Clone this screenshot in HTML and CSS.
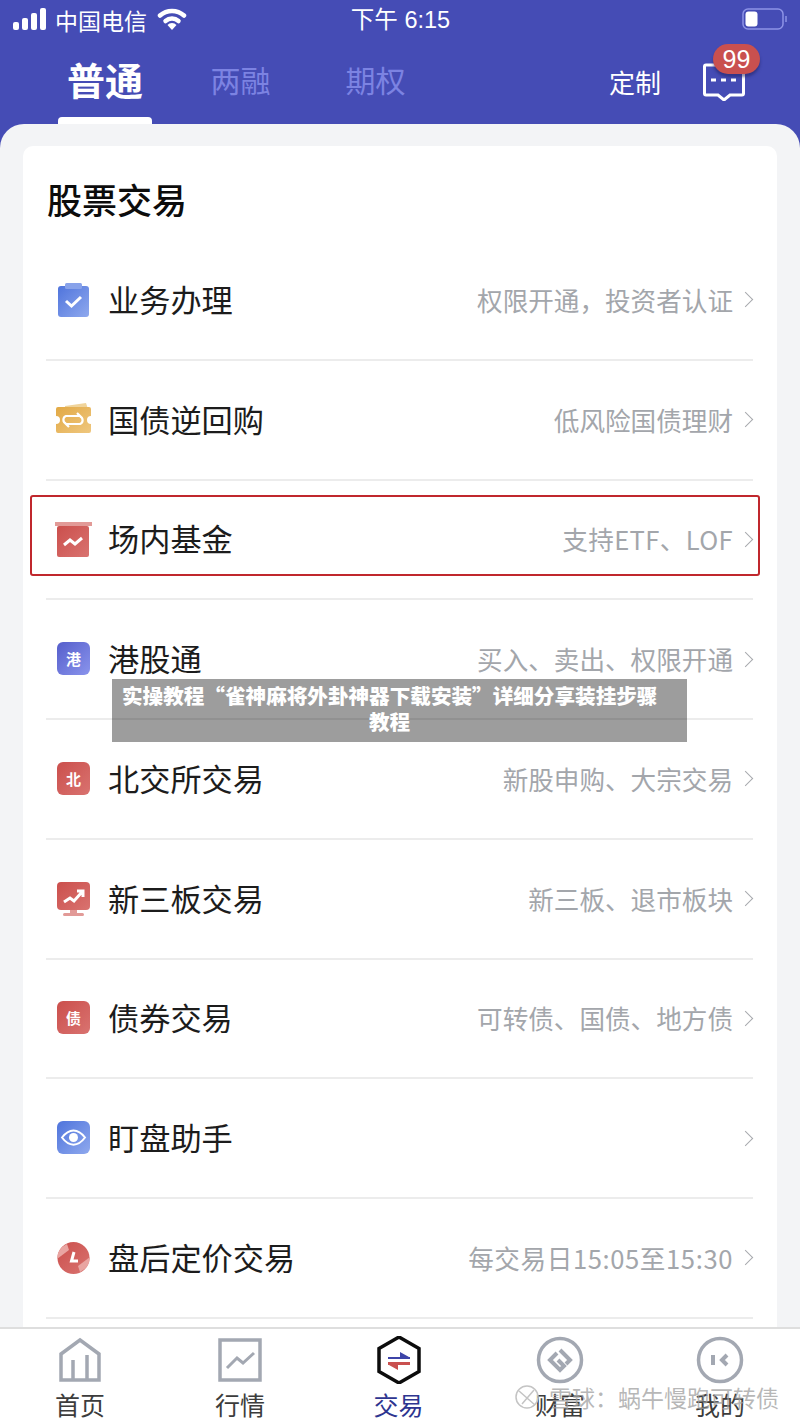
FILE: index.html
```html
<!DOCTYPE html>
<html lang="zh-CN">
<head>
<meta charset="utf-8">
<title>交易</title>
<link rel="stylesheet" href="styles.css">
</head>
<body>
<svg class="defs" aria-hidden="true">
  <defs>
    <linearGradient id="gBlue" x1="0" y1="0" x2="1" y2="1"><stop offset="0" stop-color="#4f74dc"/><stop offset="1" stop-color="#8fa9ee"/></linearGradient>
    <linearGradient id="gIndigo" x1="0" y1="0" x2="1" y2="1"><stop offset="0" stop-color="#555ecb"/><stop offset="1" stop-color="#8a94ec"/></linearGradient>
    <linearGradient id="gRed" x1="0" y1="0" x2="1" y2="1"><stop offset="0" stop-color="#cb4f4c"/><stop offset="1" stop-color="#d97370"/></linearGradient>
    <linearGradient id="gGold" x1="0" y1="0" x2="1" y2="1"><stop offset="0" stop-color="#e2a945"/><stop offset="1" stop-color="#efc77f"/></linearGradient>
  </defs>
</svg>
<div class="phone">
  <header class="top">
    <div class="status">
      <div class="status-left">
        <svg class="signal" viewBox="0 0 33 22"><rect x="0" y="14" width="6" height="8" rx="2"/><rect x="9" y="10" width="6" height="12" rx="2"/><rect x="18" y="5" width="6" height="17" rx="2"/><rect x="27" y="0" width="6" height="22" rx="2"/></svg>
        <span class="carrier">中国电信</span>
        <svg class="wifi" viewBox="0 0 30 22"><path d="M3 7.500a18 18 0 0 1 24 0" fill="none" stroke="#fff" stroke-width="4.500" stroke-linecap="round"/><path d="M8.500 13a10 10 0 0 1 13 0" fill="none" stroke="#fff" stroke-width="4.500" stroke-linecap="round"/><path d="M10.500 17a6 6 0 0 1 9 0L15 22z" fill="#fff"/></svg>
      </div>
      <span class="clock">下午 6:15</span>
      <svg class="battery" viewBox="0 0 46 22"><rect x="1" y="1" width="40" height="20" rx="5" fill="none" stroke="#8d93e6" stroke-width="1.500"/><rect x="3.500" y="3.500" width="12" height="15" rx="3" fill="#fff"/><path d="M44 8v6" stroke="#8d93e6" stroke-width="1.500"/></svg>
    </div>
    <nav class="tabs">
      <a class="tab tab-on">普通</a>
      <a class="tab">两融</a>
      <a class="tab">期权</a>
      <span class="custom">定制</span>
      <div class="msg">
        <svg class="msg-icon" viewBox="0 0 44 38"><path d="M4 2h36a1.500 1.500 0 0 1 1.500 1.500v27a1.500 1.500 0 0 1-1.500 1.500H28l-6 5-6-5H4a1.500 1.500 0 0 1-1.500-1.500v-27A1.500 1.500 0 0 1 4 2z" fill="none" stroke="#fff" stroke-width="3"/><path d="M9 17h5M19 17h5M29 17h5" stroke="#fff" stroke-width="3"/></svg>
        <span class="badge">99</span>
      </div>
    </nav>
  </header>

  <main class="sheet">
    <section class="card">
      <h1 class="title">股票交易</h1>

      <div class="row">
        <svg class="ico" viewBox="0 0 40 40"><rect x="5" y="6" width="31" height="31" rx="3" fill="url(#gBlue)"/><rect x="12" y="3" width="17" height="6" rx="1.500" fill="#88a2ea"/><path d="M13 21l5.500 5L28 17" fill="none" stroke="#fff" stroke-width="3"/></svg>
        <span class="name">业务办理</span><span class="sub">权限开通，投资者认证</span><i class="chev"></i>
      </div>
      <div class="row">
        <svg class="ico" viewBox="0 0 40 40"><path d="M12 6l21-3 2 6H12z" fill="#f0d49b"/><path d="M5 7h31a2 2 0 0 1 2 2v7a4 4 0 0 0 0 8v7a2 2 0 0 1-2 2H5a2 2 0 0 1-2-2v-7a4 4 0 0 0 0-8V9a2 2 0 0 1 2-2z" fill="url(#gGold)"/><path d="M13 23.500a4 4 0 0 1 0-7.500h14l-3-3M27 16.500a4 4 0 0 1 0 7.500H13l3 3" fill="none" stroke="#fff" stroke-width="2.200"/></svg>
        <span class="name">国债逆回购</span><span class="sub">低风险国债理财</span><i class="chev"></i>
      </div>
      <div class="row">
        <svg class="ico" viewBox="0 0 40 40"><rect x="4" y="7" width="32" height="31" rx="2" fill="url(#gRed)"/><rect x="2" y="3" width="37" height="4" fill="#e29a97"/><path d="M11 26l6-5 5 4 7-6" fill="none" stroke="#fff" stroke-width="3"/></svg>
        <span class="name">场内基金</span><span class="sub sub-etf">支持ETF、LOF</span><i class="chev"></i>
      </div>
      <div class="row">
        <svg class="ico" viewBox="0 0 40 40"><rect x="4" y="3" width="33" height="33" rx="6" fill="url(#gIndigo)"/><text class="ico-t" x="20.500" y="25.500">港</text></svg>
        <span class="name">港股通</span><span class="sub">买入、卖出、权限开通</span><i class="chev"></i>
      </div>
      <div class="row">
        <svg class="ico" viewBox="0 0 40 40"><rect x="4" y="3" width="33" height="33" rx="6" fill="url(#gRed)"/><text class="ico-t" x="20.500" y="25.500">北</text></svg>
        <span class="name">北交所交易</span><span class="sub">新股申购、大宗交易</span><i class="chev"></i>
      </div>
      <div class="row">
        <svg class="ico" viewBox="0 0 40 40"><rect x="4" y="3" width="33" height="28" rx="4" fill="url(#gRed)"/><rect x="17" y="31" width="7" height="4" fill="#e29a97"/><rect x="10" y="34" width="21" height="3" rx="1.500" fill="#e29a97"/><path d="M11 23l6-4 4 3 8-9M24 12h6v6" fill="none" stroke="#fff" stroke-width="3"/></svg>
        <span class="name">新三板交易</span><span class="sub">新三板、退市板块</span><i class="chev"></i>
      </div>
      <div class="row">
        <svg class="ico" viewBox="0 0 40 40"><rect x="4" y="3" width="33" height="33" rx="6" fill="url(#gRed)"/><text class="ico-t" x="20.500" y="25.500">债</text></svg>
        <span class="name">债券交易</span><span class="sub">可转债、国债、地方债</span><i class="chev"></i>
      </div>
      <div class="row">
        <svg class="ico" viewBox="0 0 40 40"><rect x="4" y="3" width="33" height="33" rx="6" fill="url(#gBlue)"/><path d="M9 19.500c7-9.500 16-9.500 23 0-7 9.500-16 9.500-23 0z" fill="none" stroke="#fff" stroke-width="2"/><circle cx="20.500" cy="19.500" r="4.500" fill="#fff"/></svg>
        <span class="name">盯盘助手</span><span class="sub"></span><i class="chev"></i>
      </div>
      <div class="row">
        <svg class="ico" viewBox="0 0 40 40"><circle cx="20.500" cy="20" r="16" fill="url(#gRed)"/><path d="M4 21a17 17 0 0 1 10-15l2 6z" fill="#e9a5a2"/><path d="M37 19a17 17 0 0 1-10 15l-2-6z" fill="#e9a5a2"/><path d="M21 14l-2.500 9H25" fill="none" stroke="#fff" stroke-width="3"/></svg>
        <span class="name">盘后定价交易</span><span class="sub sub-time">每交易日15:05至15:30</span><i class="chev"></i>
      </div>
    </section>
  </main>

  <footer class="bar">
    <div class="item">
      <svg class="nav-ico" viewBox="0 0 48 48"><path d="M5 18L24 4l19 14v26H5z" fill="none" stroke="#a3a8b2" stroke-width="3.500"/><path d="M17 44V24M31 44V19" stroke="#a3a8b2" stroke-width="3.500"/></svg>
      <span>首页</span>
    </div>
    <div class="item">
      <svg class="nav-ico" viewBox="0 0 48 48"><rect x="4" y="4" width="40" height="40" fill="none" stroke="#a3a8b2" stroke-width="3.500"/><path d="M11 32l10-10 6 5 11-10" fill="none" stroke="#a3a8b2" stroke-width="3"/></svg>
      <span>行情</span>
    </div>
    <div class="item item-on">
      <svg class="nav-ico" viewBox="0 0 48 48"><path d="M24 1l20 11.500v23L24 47 4 35.500v-23z" fill="none" stroke="#0c0c0c" stroke-width="3.500"/><path d="M13 21h22v2H13zM25 16l9 5H25z" fill="#3d44a8"/><path d="M13 26h22v3H13zM23 29v5l-9-5z" fill="#c9504f"/></svg>
      <span>交易</span>
    </div>
    <div class="item">
      <svg class="nav-ico" viewBox="0 0 48 48"><circle cx="24" cy="24" r="21.500" fill="none" stroke="#a3a8b2" stroke-width="3.500"/><path d="M21 17l-7 7 10 10 4-4-6-6M24 14l10 10-4 4" fill="none" stroke="#a3a8b2" stroke-width="4"/></svg>
      <span>财富</span>
    </div>
    <div class="item">
      <svg class="nav-ico" viewBox="0 0 48 48"><circle cx="24" cy="24" r="21.500" fill="none" stroke="#a3a8b2" stroke-width="3.500"/><path d="M17 19v10" stroke="#a3a8b2" stroke-width="4"/><path d="M31 19l-5 5 5 5" fill="none" stroke="#a3a8b2" stroke-width="4"/></svg>
      <span>我的</span>
    </div>
  </footer>

  <div class="highlight"></div>
  <div class="overlay">实操教程“雀神麻将外卦神器下载安装”详细分享装挂步骤<br>教程</div>
  <div class="mark">
    <svg class="mark-ico" viewBox="0 0 26 26"><circle cx="13" cy="13" r="11" fill="none" stroke="#c4c4c4" stroke-width="1.500"/><path d="M5 7l16 14M8 20L20 6" fill="none" stroke="#c4c4c4" stroke-width="1.500"/></svg>
    <span>雪球：蜗牛慢跑可转债</span>
  </div>
</div>
</body>
</html>
```

FILE: styles.css
```css
* { box-sizing: border-box; }
html, body { margin: 0; padding: 0; }
body {
  width: 800px;
  height: 1422px;
  overflow: hidden;
  font-family: "Noto Sans CJK SC", "Noto Sans", sans-serif;
  background: #fff;
}
.defs { position: absolute; width: 0; height: 0; }
.phone {
  position: relative;
  width: 800px;
  height: 1422px;
  display: flex;
  flex-direction: column;
  background: #454cb5;
  overflow: hidden;
}
.top { height: 124px; flex: none; color: #fff; }
.status {
  height: 40px;
  padding: 0 12px 0 13px;
  display: grid;
  grid-template-columns: 1fr auto 1fr;
  align-items: center;
}
.status-left { display: flex; align-items: center; }
.signal { width: 33px; height: 22px; fill: #fff; margin-right: 9px; margin-top: -2px; }
.carrier { font-size: 23px; line-height: 40px; margin-right: 10px; }
.wifi { width: 30px; height: 22px; margin-top: -2px; }
.clock { font-size: 23.500px; line-height: 40px; font-family: "Liberation Sans", "Noto Sans CJK SC", sans-serif; }
.battery { width: 46px; height: 22px; justify-self: end; margin-top: -2px; }

.tabs {
  height: 84px;
  position: relative;
  display: flex;
  align-items: center;
  padding-left: 58px;
}
.tab {
  width: 94px;
  margin-right: 40px;
  height: 84px;
  line-height: 78px;
  text-align: center;
  font-size: 30px;
  color: #7c83e2;
}
.tab-on {
  position: relative;
  font-size: 38px;
  font-weight: 700;
  color: #fff;
  margin-right: 58px;
}
.tab-on::after {
  content: "";
  position: absolute;
  left: 0;
  right: 0;
  bottom: 0;
  height: 7px;
  background: #fff;
  border-radius: 4px 4px 0 0;
}
.tab + .tab { width: 61px; margin-right: 74px; }
.custom { margin-left: auto; margin-right: 41px; font-size: 26px; line-height: 82px; }
.msg { position: relative; width: 42px; height: 36px; margin-right: 56px; margin-top: -2px; }
.msg-icon { width: 44px; height: 38px; display: block; }
.badge {
  position: absolute;
  left: 11px;
  top: -19px;
  width: 47px;
  height: 30px;
  border-radius: 15px;
  background: #c9504f;
  box-shadow: 0 3px 3px rgba(30, 30, 90, .5);
  font: 25px/30px "Liberation Sans", sans-serif;
  text-align: center;
  color: #fff;
}

.sheet {
  flex: 1;
  min-height: 0;
  overflow: hidden;
  background: #f3f4f6;
  border-radius: 24px 24px 0 0;
  padding: 22px 23px 0;
}
.card {
  background: #fff;
  border-radius: 10px 10px 0 0;
  padding: 0 24px 0 23px;
  height: 1300px;
}
.title {
  margin: 0;
  height: 95px;
  padding: 30px 0 0 1px;
  font-size: 35px;
  line-height: 46px;
  font-weight: 500;
  color: #0c0c0c;
}
.row {
  height: 119.75px;
  display: flex;
  align-items: center;
  border-bottom: 2px solid #ececec;
  padding-left: 7px;
}
.ico { width: 40px; height: 40px; flex: none; margin-right: 15px; }
.ico-t {
  font-size: 15px;
  font-weight: 700;
  fill: #fff;
  text-anchor: middle;
}
.name { font-size: 31.200px; color: #1c1c1c; font-weight: 400; line-height: 40px; margin-bottom: 2px; }
.sub { margin-left: auto; font-size: 25.600px; color: #a3a6ab; line-height: 40px; }
.sub-etf { letter-spacing: .35px; }
.sub-time { letter-spacing: .6px; }
.chev {
  width: 11px;
  height: 11px;
  margin: 0 2px 0 7px;
  border-top: 1.500px solid #a7a9ad;
  border-right: 1.500px solid #a7a9ad;
  transform: rotate(45deg);
  flex: none;
}

.bar {
  flex: none;
  height: 95px;
  background: #fff;
  border-top: 2px solid #dedede;
  display: grid;
  grid-template-columns: repeat(5, 160px);
  padding-top: 7px;
}
.item {
  display: flex;
  flex-direction: column;
  align-items: center;
  font-size: 25px;
  line-height: 36px;
  color: #3c3c3c;
}
.item-on { color: #2e3590; padding-right: 3px; }
.nav-ico { width: 48px; height: 48px; display: block; margin-bottom: 2px; }

.highlight {
  position: absolute;
  left: 30px;
  top: 495px;
  width: 730px;
  height: 81px;
  border: 2px solid #c0272d;
  border-radius: 3px;
}
.overlay {
  position: absolute;
  left: 112px;
  top: 679px;
  width: 575px;
  height: 63px;
  padding: 3px 30px 0 10px;
  background: rgba(0, 0, 0, .385);
  color: #fff;
  font-size: 20.600px;
  font-weight: 900;
  line-height: 26px;
  text-align: center;
  white-space: nowrap;
}
.mark {
  position: absolute;
  left: 514px;
  top: 1380px;
  display: flex;
  align-items: center;
  color: rgba(160, 160, 160, .75);
  font-size: 23px;
  line-height: 34px;
}
.mark-ico { width: 26px; height: 26px; margin-right: 9px; }
```
